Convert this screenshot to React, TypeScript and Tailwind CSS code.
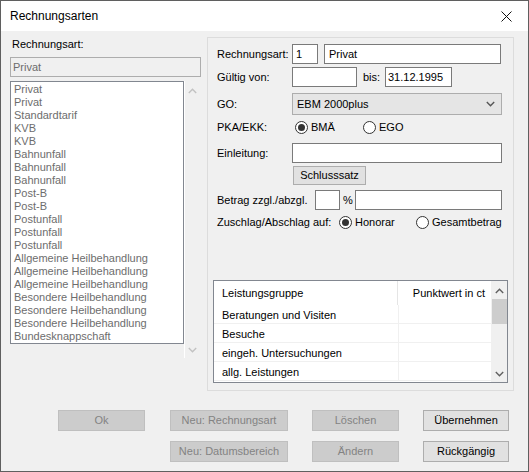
import React from "react";

const Chevron = ({ dir, color }: { dir: "up" | "down"; color: string }) => (
  <svg width="9" height="6" viewBox="0 0 9 6">
    <path
      d={dir === "up" ? "M0.8 5 L4.5 1.3 L8.2 5" : "M0.8 1 L4.5 4.7 L8.2 1"}
      stroke={color}
      strokeWidth="1.4"
      fill="none"
    />
  </svg>
);

const Radio = ({ checked }: { checked?: boolean }) => (
  <span className="w-[13px] h-[13px] rounded-full border border-[#333333] bg-white flex items-center justify-center shrink-0">
    {checked && <span className="w-[7px] h-[7px] rounded-full bg-[#333333]" />}
  </span>
);

const Btn = ({ label, w, disabled }: { label: string; w: string; disabled?: boolean }) => (
  <div
    className={
      "h-[21px] flex items-center justify-center border " +
      w +
      (disabled
        ? " bg-[#cccccc] border-[#bfbfbf] text-[#838383]"
        : " bg-[#e1e1e1] border-[#adadad] text-black")
    }
  >
    {label}
  </div>
);

const items = [
  "Privat",
  "Privat",
  "Standardtarif",
  "KVB",
  "KVB",
  "Bahnunfall",
  "Bahnunfall",
  "Bahnunfall",
  "Post-B",
  "Post-B",
  "Postunfall",
  "Postunfall",
  "Postunfall",
  "Allgemeine Heilbehandlung",
  "Allgemeine Heilbehandlung",
  "Allgemeine Heilbehandlung",
  "Besondere Heilbehandlung",
  "Besondere Heilbehandlung",
  "Besondere Heilbehandlung",
  "Bundesknappschaft",
];

const rows = ["Beratungen und Visiten", "Besuche", "eingeh. Untersuchungen", "allg. Leistungen"];

export default function App() {
  return (
    <div className="w-[529px] h-[472px] border border-[#5f5f5f] flex flex-col bg-[#f0f0f0] font-['Liberation_Sans',Arial,sans-serif] text-[11px] leading-[13px] text-black overflow-hidden">
      {/* Title bar */}
      <div className="h-[30px] bg-white flex items-center justify-between pl-[9px] pr-[16px] shrink-0">
        <span className="text-[12px] leading-[14px] text-black">Rechnungsarten</span>
        <svg width="11" height="11" viewBox="0 0 11 11">
          <path d="M0.5 0.5 L10.5 10.5 M10.5 0.5 L0.5 10.5" stroke="#111" strokeWidth="1" fill="none" />
        </svg>
      </div>

      {/* Body */}
      <div className="flex flex-col">
        <div className="flex items-start">
          {/* Left column */}
          <div className="ml-[9px] mt-[7px] w-[191px] flex flex-col">
            <div className="h-[13px] pl-[2px]">Rechnungsart:</div>
            <div className="mt-[6px] h-[20px] border border-[#adadad] bg-[#f0f0f0] text-[#6d6d6d] pl-[2px] flex items-center">
              Privat
            </div>
            <div className="mt-[4px] flex items-start">
              <div className="w-[174px] h-[263px] border border-[#828790] bg-white pt-[1px] pl-[3px] text-[#6d6d6d] flex flex-col">
                {items.map((t, i) => (
                  <div key={i} className="h-[13px] leading-[13px] whitespace-nowrap">
                    {t}
                  </div>
                ))}
              </div>
              <div className="w-[16px] h-[277px] border-l border-white flex flex-col justify-between items-center pt-[7px] pb-[5px]">
                <Chevron dir="up" color="#c2c2c2" />
                <Chevron dir="down" color="#c2c2c2" />
              </div>
            </div>
          </div>

          {/* Group box */}
          <div className="ml-[6px] mt-[6px] w-[307px] h-[354px] border border-[#dcdcdc] pl-[9px] pt-[6px] flex flex-col">
            {/* Row 1 */}
            <div className="flex items-center h-[20px]">
              <div className="w-[75px]">Rechnungsart:</div>
              <div className="w-[26px] h-full border border-[#7a7a7a] bg-white pl-[3px] flex items-center">1</div>
              <div className="ml-[6px] w-[177px] h-full border border-[#7a7a7a] bg-white pl-[4px] flex items-center">
                Privat
              </div>
            </div>
            {/* Row 2 */}
            <div className="mt-[3px] flex items-center h-[20px]">
              <div className="w-[75px]">Gültig von:</div>
              <div className="w-[65px] h-full border border-[#7a7a7a] bg-white" />
              <div className="ml-[6px] w-[22px]">bis:</div>
              <div className="w-[67px] h-full border border-[#7a7a7a] bg-white pl-[2px] flex items-center">
                31.12.1995
              </div>
            </div>
            {/* Row 3 */}
            <div className="mt-[6px] flex items-center h-[22px]">
              <div className="w-[75px]">GO:</div>
              <div className="w-[210px] h-full border border-[#adadad] bg-[#e5e5e5] pl-[4px] pr-[6px] flex items-center justify-between">
                <span>EBM 2000plus</span>
                <Chevron dir="down" color="#555555" />
              </div>
            </div>
            {/* Row 4 */}
            <div className="mt-[5px] flex items-center h-[14px]">
              <div className="w-[78px]">PKA/EKK:</div>
              <div className="w-[68px] flex items-center">
                <Radio checked />
                <span className="ml-[3px]">BMÄ</span>
              </div>
              <div className="flex items-center">
                <Radio />
                <span className="ml-[3px]">EGO</span>
              </div>
            </div>
            {/* Row 5 */}
            <div className="mt-[9px] flex items-center h-[20px]">
              <div className="w-[75px]">Einleitung:</div>
              <div className="w-[210px] h-full border border-[#7a7a7a] bg-white" />
            </div>
            {/* Row 6 */}
            <div className="mt-[3px] flex items-center h-[19px]">
              <div className="ml-[76px] w-[73px] h-full border border-[#adadad] bg-[#e1e1e1] flex items-center justify-center">
                Schlusssatz
              </div>
            </div>
            {/* Row 7 */}
            <div className="mt-[5px] flex items-center h-[20px]">
              <div className="w-[98px] whitespace-nowrap">Betrag zzgl./abzgl.</div>
              <div className="w-[25px] h-full border border-[#7a7a7a] bg-white" />
              <div className="w-[15px] pl-[3px]">%</div>
              <div className="w-[147px] h-full border border-[#7a7a7a] bg-white" />
            </div>
            {/* Row 8 */}
            <div className="mt-[5px] flex items-center h-[14px]">
              <div className="w-[122px] whitespace-nowrap">Zuschlag/Abschlag auf:</div>
              <div className="w-[77px] flex items-center">
                <Radio checked />
                <span className="ml-[3px]">Honorar</span>
              </div>
              <div className="flex items-center">
                <Radio />
                <span className="ml-[3px]">Gesamtbetrag</span>
              </div>
            </div>
            {/* Table */}
            <div className="-ml-[4px] mt-[51px] w-[295px] h-[103px] border border-[#828790] bg-white flex">
              <div className="w-[277px] flex flex-col">
                <div className="h-[24px] flex items-center">
                  <div className="w-[184px] h-full pl-[8px] flex items-center border-r border-[#e5e5e5]">
                    Leistungsgruppe
                  </div>
                  <div className="flex-1 pr-[6px] text-right">Punktwert in ct</div>
                </div>
                {rows.map((r, i) => (
                  <div key={i} className="h-[19px] flex border-b border-[#f0f0f0]">
                    <div className="w-[185px] h-full pl-[8px] pt-[2px] flex items-center border-r border-[#f0f0f0] whitespace-nowrap">
                      {r}
                    </div>
                    <div className="flex-1" />
                  </div>
                ))}
              </div>
              <div className="w-[16px] bg-[#f0f0f0] flex flex-col items-center">
                <div className="h-[17px] flex items-center justify-center pt-[2px]">
                  <Chevron dir="up" color="#606060" />
                </div>
                <div className="w-[15px] h-[25px] bg-[#cdcdcd] mt-[1px]" />
                <div className="flex-1" />
                <div className="h-[17px] flex items-center justify-center">
                  <Chevron dir="down" color="#606060" />
                </div>
              </div>
            </div>
          </div>
        </div>

        {/* Buttons */}
        <div className="mt-[19px] ml-[57px] flex">
          <Btn label="Ok" w="w-[87px]" disabled />
          <div className="ml-[25px]">
            <Btn label="Neu: Rechnungsart" w="w-[118px]" disabled />
          </div>
          <div className="ml-[24px]">
            <Btn label="Löschen" w="w-[87px]" disabled />
          </div>
          <div className="ml-[24px]">
            <Btn label="Übernehmen" w="w-[86px]" />
          </div>
        </div>
        <div className="mt-[10px] ml-[169px] flex">
          <Btn label="Neu: Datumsbereich" w="w-[118px]" disabled />
          <div className="ml-[24px]">
            <Btn label="Ändern" w="w-[87px]" disabled />
          </div>
          <div className="ml-[24px]">
            <Btn label="Rückgängig" w="w-[86px]" />
          </div>
        </div>
      </div>
    </div>
  );
}
